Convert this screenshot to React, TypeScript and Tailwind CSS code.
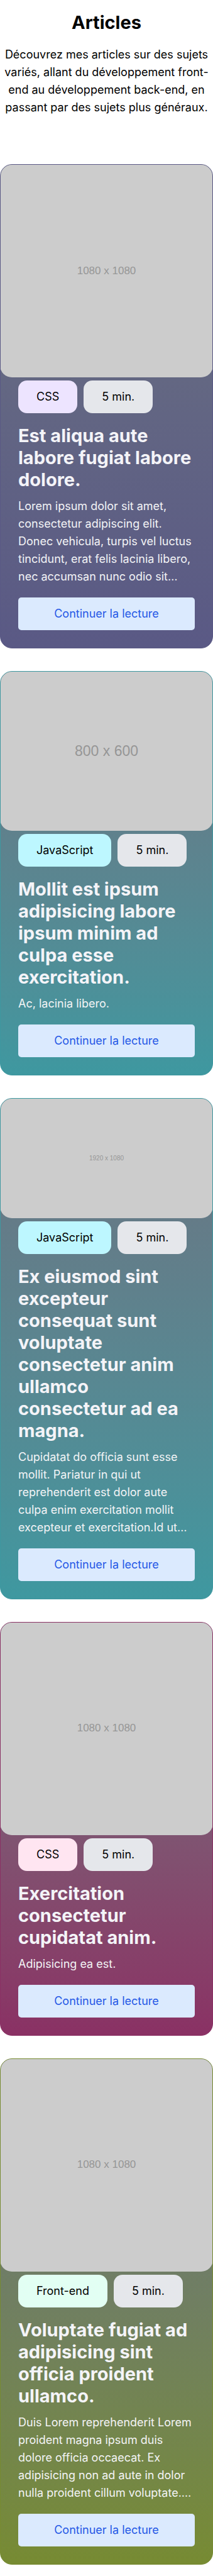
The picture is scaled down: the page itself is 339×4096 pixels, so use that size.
type Article = {
  title: string;
  excerpt: string;
  category: string;
  duration: string;
  cover: string;
  coverStyle: string;
  cardStyle: string;
  badgeStyle: string;
};

const articles: Article[] = [
  {
    title: "Est aliqua aute labore fugiat labore dolore.",
    excerpt:
      "Lorem ipsum dolor sit amet, consectetur adipiscing elit. Donec vehicula, turpis vel luctus tincidunt, erat felis lacinia libero, nec accumsan nunc odio sit…",
    category: "CSS",
    duration: "5 min.",
    cover: "1080 x 1080",
    coverStyle: "aspect-square text-[17px]",
    cardStyle: "border-[#5a5985] to-[#5a5985]",
    badgeStyle: "bg-[#ede4ff]",
  },
  {
    title: "Mollit est ipsum adipisicing labore ipsum minim ad culpa esse exercitation.",
    excerpt: "Ac, lacinia libero.",
    category: "JavaScript",
    duration: "5 min.",
    cover: "800 x 600",
    coverStyle: "aspect-4/3 text-[23px]",
    cardStyle: "border-[#3e98a0] to-[#3e98a0]",
    badgeStyle: "bg-[#bdf7ff]",
  },
  {
    title: "Ex eiusmod sint excepteur consequat sunt voluptate consectetur anim ullamco consectetur ad ea magna.",
    excerpt:
      "Cupidatat do officia sunt esse mollit. Pariatur in qui ut reprehenderit est dolor aute culpa enim exercitation mollit excepteur et exercitation.Id ut…",
    category: "JavaScript",
    duration: "5 min.",
    cover: "1920 x 1080",
    coverStyle: "aspect-video text-[10px]",
    cardStyle: "border-[#3e98a0] to-[#3e98a0]",
    badgeStyle: "bg-[#bdf7ff]",
  },
  {
    title: "Exercitation consectetur cupidatat anim.",
    excerpt: "Adipisicing ea est.",
    category: "CSS",
    duration: "5 min.",
    cover: "1080 x 1080",
    coverStyle: "aspect-square text-[17px]",
    cardStyle: "border-[#8a3164] to-[#8a3164]",
    badgeStyle: "bg-[#ffe5f1]",
  },
  {
    title: "Voluptate fugiat ad adipisicing sint officia proident ullamco.",
    excerpt:
      "Duis Lorem reprehenderit Lorem proident magna ipsum duis dolore officia occaecat. Ex adipisicing non ad aute in dolor nulla proident cillum voluptate.…",
    category: "Front-end",
    duration: "5 min.",
    cover: "1080 x 1080",
    coverStyle: "aspect-square text-[17px]",
    cardStyle: "border-[#778b32] to-[#778b32]",
    badgeStyle: "bg-[#e2fff3]",
  },
];

function ArticleCard({ article }: { article: Article }) {
  return (
    <article
      className={`flex flex-col overflow-hidden rounded-[19px] border bg-linear-to-b from-[#6b7280] ${article.cardStyle}`}
    >
      <div
        className={`-mx-px -mt-px flex items-center justify-center rounded-[19px] bg-[#cccccc] font-['Liberation_Sans',sans-serif] text-[#969696] ${article.coverStyle}`}
      >
        {article.cover}
      </div>
      <div className="flex flex-col px-7 pt-[5px] pb-7">
        <div className="flex gap-[10px]">
          <span className={`rounded-[14px] px-[29px] py-3 text-black ${article.badgeStyle}`}>{article.category}</span>
          <span className="rounded-[14px] bg-[#e5e7eb] px-[29px] py-3 text-black">{article.duration}</span>
        </div>
        <h2 className="mt-[18px] text-[29px] leading-[35px] font-bold text-[#f4f4f8]">{article.title}</h2>
        <p className="mt-[11px] text-[#f3f4f6]">{article.excerpt}</p>
        <a href="#" className="mt-[19px] rounded-[5px] bg-[#dbeafe] py-3 text-center text-[#2558e6]">
          Continuer la lecture
        </a>
      </div>
    </article>
  );
}

export default function App() {
  return (
    <main className="bg-white pb-[18px] font-['Inter',sans-serif] text-[18px] leading-[28px] text-black">
      <header className="flex flex-col gap-5 pt-[18px] pb-[76px] text-center">
        <h1 className="text-[29px] leading-[35px] font-bold">Articles</h1>
        <p>
          Découvrez mes articles sur des sujets variés, allant du développement front-end au développement back-end, en
          passant par des sujets plus généraux.
        </p>
      </header>
      <section className="flex flex-col gap-9">
        {articles.map((article) => (
          <ArticleCard key={article.title} article={article} />
        ))}
      </section>
    </main>
  );
}
